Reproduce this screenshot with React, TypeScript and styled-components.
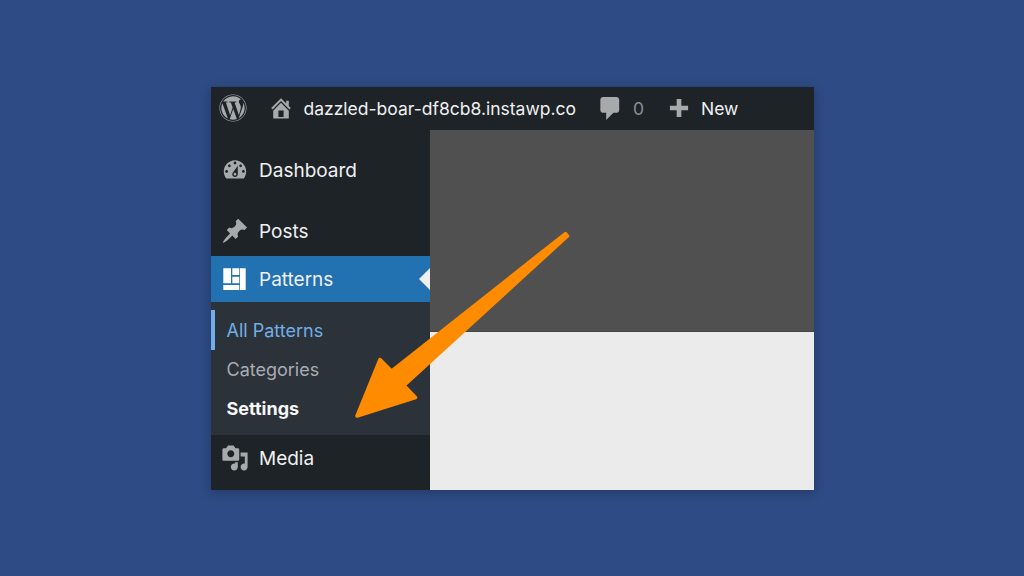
import React from "react";
import styled, { createGlobalStyle } from "styled-components";
import { FaWordpress } from "react-icons/fa";

const Global = createGlobalStyle`
  html, body { margin: 0; padding: 0; height: 100%; }
  body { background: #2e4b85; font-family: Inter, "Liberation Sans", sans-serif; }
  #root { height: 100%; }
`;

const Page = styled.div`
  width: 1024px;
  height: 576px;
  display: flex;
  align-items: center;
  justify-content: center;
  overflow: hidden;
`;

const Card = styled.div`
  position: relative;
  width: 603px;
  height: 403px;
  display: flex;
  flex-direction: column;
  background: #1d2327;
  box-shadow: 0 2px 10px rgba(0, 0, 0, 0.25);
`;

const TopBar = styled.header`
  height: 43px;
  flex: none;
  display: flex;
  align-items: center;
  padding-left: 8px;
  background: #1d2327;
  font-size: 17.5px;
  color: #f0f0f1;
`;

const BarIcon = styled.svg<{ $size: number; $ml: number }>`
  width: ${(p) => p.$size}px;
  height: ${(p) => p.$size}px;
  margin-left: ${(p) => p.$ml}px;
  flex: none;
  fill: #a7aaad;
`;

const LogoWrap = styled.span`
  display: flex;
  width: 28px;
  height: 28px;
  flex: none;
  color: #a7aaad;
  font-size: 28px;
`;

const BarText = styled.span<{ $ml: number; $muted?: boolean }>`
  margin-left: ${(p) => p.$ml}px;
  white-space: nowrap;
  color: ${(p) => (p.$muted ? "#8c8f94" : "#f0f0f1")};
`;

const Body = styled.div`
  flex: 1;
  display: flex;
  min-height: 0;
`;

const Sidebar = styled.nav`
  width: 219px;
  flex: none;
  display: flex;
  flex-direction: column;
  background: #1d2327;
`;

const MenuRow = styled.div<{ $h: number; $active?: boolean; $pb?: number; $pt?: number }>`
  position: relative;
  height: ${(p) => p.$h}px;
  flex: none;
  box-sizing: border-box;
  display: flex;
  align-items: center;
  padding-left: 10px;
  padding-top: ${(p) => p.$pt || 0}px;
  padding-bottom: ${(p) => p.$pb || 0}px;
  gap: 10.5px;
  font-size: 19px;
  color: #f0f0f1;
  background: ${(p) => (p.$active ? "#2271b1" : "transparent")};
`;

const MenuIcon = styled.svg<{ $fill?: string }>`
  width: 28px;
  height: 28px;
  flex: none;
  fill: ${(p) => p.$fill || "#a7aaad"};
`;

const Notch = styled.span`
  position: absolute;
  right: 0;
  top: 12px;
  width: 0;
  height: 0;
  border-top: 11px solid transparent;
  border-bottom: 11px solid transparent;
  border-right: 11px solid #f0f0f1;
`;

const Submenu = styled.div`
  height: 133px;
  flex: none;
  display: flex;
  flex-direction: column;
  padding-top: 9px;
  box-sizing: border-box;
  background: #2c3239;
`;

const SubItem = styled.div<{ $state?: "current" | "strong" }>`
  position: relative;
  height: 39px;
  flex: none;
  display: flex;
  align-items: center;
  font-size: 18px;
  padding-left: 16px;
  font-weight: ${(p) => (p.$state === "strong" ? 700 : 400)};
  color: ${(p) =>
    p.$state === "current" ? "#72aee6" : p.$state === "strong" ? "#f6f7f7" : "#a8acb4"};

  ${(p) =>
    p.$state === "current"
      ? `&::before {
    content: "";
    position: absolute;
    left: 0;
    top: -1px;
    bottom: 0;
    width: 4px;
    background: #72aee6;
  }`
      : ""}
`;

const Main = styled.main`
  flex: 1;
  display: flex;
  flex-direction: column;
`;

const Dark = styled.div`
  height: 202px;
  flex: none;
  box-sizing: border-box;
  background: #505050;
  border-bottom: 1px solid #454545;
`;

const Light = styled.div`
  flex: 1;
  background: #ebebeb;
`;

const ArrowSvg = styled.svg`
  position: absolute;
  left: 0;
  top: 0;
  width: 603px;
  height: 403px;
  pointer-events: none;
`;

const PatternsIcon = () => (
  <MenuIcon viewBox="0 0 28 28" $fill="#fff">
    <path d="M2.300 3.300h7.700v15H2.300zM11.300 3.300h7v6.700h-7zM19 3.300h5.700V25H19zM11.300 11.700h7v6.600h-7zM2.300 20h16v5h-16z" />
  </MenuIcon>
);

export default function App() {
  return (
    <Page>
      <Global />
      <Card>
        <TopBar>
          <LogoWrap>
            <FaWordpress />
          </LogoWrap>
          <BarIcon $size={26} $ml={21} viewBox="0 0 20 20">
            <path d="M16 8.500l1.530 1.530-1.060 1.060L10 4.620l-6.470 6.470-1.060-1.060L10 2.500l4 4v-2h2v4zm-6-2.460l6 5.990V18H4v-5.970zM12 17v-5H8v5h4z" />
          </BarIcon>
          <BarText $ml={10}>dazzled-boar-df8cb8.instawp.co</BarText>
          <BarIcon $size={29} $ml={20} viewBox="0 0 20 20">
            <path d="M5 2h9c1.100 0 2 .9 2 2v7c0 1.100-.9 2-2 2h-2l-5 5v-5H5c-1.100 0-2-.9-2-2V4c0-1.100.9-2 2-2z" />
          </BarIcon>
          <BarText $ml={8} $muted>0</BarText>
          <BarIcon $size={26} $ml={22} viewBox="0 0 20 20">
            <path d="M17 8.200v3.600h-5.200V17H8.200v-5.200H3V8.200h5.200V3h3.600v5.200z" />
          </BarIcon>
          <BarText $ml={9}>New</BarText>
        </TopBar>
        <Body>
          <Sidebar>
            <MenuRow $h={80} $pt={1}>
              <MenuIcon viewBox="0 0 20 20">
                <path d="M3.760 16h12.480c1.100-1.370 1.760-3.110 1.760-5 0-4.420-3.580-8-8-8s-8 3.580-8 8c0 1.890.66 3.630 1.760 5zM10 4c.55 0 1 .45 1 1s-.45 1-1 1-1-.45-1-1 .45-1 1-1zM6 6c.55 0 1 .45 1 1s-.45 1-1 1-1-.45-1-1 .45-1 1-1zm8 0c.55 0 1 .45 1 1s-.45 1-1 1-1-.45-1-1 .45-1 1-1zm-5.370 5.550L12 7v6c0 1.100-.9 2-2 2s-2-.9-2-2c0-.57.24-1.080.63-1.450zM4 10c.55 0 1 .45 1 1s-.45 1-1 1-1-.45-1-1 .45-1 1-1zm12 0c.55 0 1 .45 1 1s-.45 1-1 1-1-.45-1-1 .45-1 1-1zm-5 3c0-.55-.45-1-1-1s-1 .45-1 1 .45 1 1 1 1-.45 1-1z" />
              </MenuIcon>
              Dashboard
            </MenuRow>
            <MenuRow $h={46} $pb={3}>
              <MenuIcon viewBox="0 0 20 20">
                <path d="M10.440 3.020l1.820-1.820 6.360 6.350-1.830 1.820c-1.050-.68-2.480-.57-3.410.36l-.75.75c-.92.93-1.040 2.350-.35 3.410l-1.830 1.820-2.410-2.410-2.800 2.790c-.42.42-3.380 2.710-3.800 2.290s1.860-3.390 2.280-3.810l2.790-2.790L4.100 9.360l1.830-1.820c1.050.69 2.480.57 3.400-.36l.75-.75c.93-.92 1.050-2.350.36-3.410z" />
              </MenuIcon>
              Posts
            </MenuRow>
            <MenuRow $h={46} $pt={1} $active>
              <PatternsIcon />
              Patterns
              <Notch />
            </MenuRow>
            <Submenu>
              <SubItem $state="current">All Patterns</SubItem>
              <SubItem>Categories</SubItem>
              <SubItem $state="strong">Settings</SubItem>
            </Submenu>
            <MenuRow $h={55} $pb={8}>
              <MenuIcon viewBox="0 0 20 20">
                <path d="M13 11V4c0-.55-.45-1-1-1h-1.670L9 1H5L3.670 3H2c-.55 0-1 .45-1 1v7c0 .55.45 1 1 1h10c.55 0 1-.45 1-1zM7 4.500c1.380 0 2.500 1.120 2.500 2.500S8.380 9.500 7 9.500 4.500 8.380 4.500 7 5.620 4.500 7 4.500zM14 6h5v10.500c0 1.380-1.120 2.500-2.500 2.500S14 17.880 14 16.500s1.120-2.500 2.500-2.500c.17 0 .34.020.5.050V9h-3V6zm-4 8.050V13h2v3.500c0 1.380-1.120 2.500-2.500 2.500S7 17.880 7 16.500 8.120 14 9.500 14c.17 0 .34.020.5.050z" />
              </MenuIcon>
              Media
            </MenuRow>
          </Sidebar>
          <Main>
            <Dark />
            <Light />
          </Main>
        </Body>
        <ArrowSvg viewBox="211 87 603 403">
          <path
            d="M565.500 233.500 L567.500 236 L404 385.500 L415.500 397.500 L357 416 L380 359.500 L391.500 371 Z"
            fill="#ff8c00"
            stroke="#ff8c00"
            strokeWidth="3.500"
            strokeLinejoin="round"
          />
        </ArrowSvg>
      </Card>
    </Page>
  );
}
